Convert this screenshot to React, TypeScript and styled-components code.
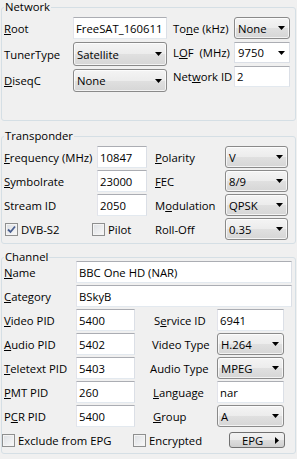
import React from "react";
import styled, { createGlobalStyle } from "styled-components";

const GlobalStyle = createGlobalStyle`
  html, body {
    margin: 0;
    padding: 0;
    background: #f0f0f0;
  }
  body {
    font-family: "Open Sans", "Noto Sans", sans-serif;
    font-size: 11.3px;
    color: #000;
  }
  * {
    box-sizing: border-box;
  }
`;

const Page = styled.div`
  width: 297px;
  height: 459px;
  padding: 0 1px;
  overflow: hidden;
`;

const Group = styled.fieldset<{ $mt: number; $pb: number }>`
  margin: ${p => p.$mt}px 0 0;
  padding: 0 3px ${p => p.$pb}px 2px;
  border: 1px solid #d5dfe5;
  border-radius: 3px;
  min-width: 0;
`;

const Legend = styled.legend`
  padding: 0 1px;
  height: 14px;
  line-height: 14px;
`;

const NetworkBody = styled.div`
  display: flex;
  gap: 6px;
  margin-top: 3px;
`;

const PairGrid = styled.div<{ $cols: string; $rows: string; $gap?: number }>`
  display: grid;
  grid-template-columns: ${p => p.$cols};
  grid-template-rows: ${p => p.$rows};
  row-gap: ${p => p.$gap ?? 3}px;
`;

const Label = styled.div<{ $indent?: number }>`
  display: flex;
  align-items: center;
  white-space: nowrap;
  padding-left: ${p => p.$indent ?? 0}px;
`;

const Key = styled.span`
  text-decoration: underline;
  text-underline-offset: 1px;
`;

const TextBox = styled.input<{ $span?: string; $mr?: number }>`
  font: inherit;
  color: #000;
  width: 100%;
  height: 100%;
  margin: 0;
  margin-right: ${p => p.$mr ?? 0}px;
  padding: 0 2px;
  background: #fff;
  border: 1px solid;
  border-color: #abadb3 #dbdfe6 #e3e9ef #e2e3ea;
  outline: none;
  grid-column: ${p => p.$span ?? "auto"};
`;

const Dropdown = styled.div<{ $editable?: boolean }>`
  display: flex;
  align-items: center;
  justify-content: space-between;
  padding: 0 4px 0 3px;
  border: 1px solid ${p => (p.$editable ? "#dbdfe6" : "#8a8a8a")};
  border-top-color: ${p => (p.$editable ? "#abadb3" : "#8a8a8a")};
  border-radius: ${p => (p.$editable ? 0 : 3)}px;
  background: ${p =>
    p.$editable
      ? "#fff"
      : "linear-gradient(#f4f4f4 0%, #ececec 50%, #e0e0e0 51%, #d6d6d6 100%)"};
  box-shadow: ${p => (p.$editable ? "none" : "inset 0 0 0 1px rgba(255,255,255,0.7)")};
`;

const ArrowIcon = ({ dir = "down" }: { dir?: "down" | "right" }) =>
  dir === "down" ? (
    <svg width="7" height="4" viewBox="0 0 7 4">
      <polygon points="0,0 7,0 3.5,4" fill="#000" />
    </svg>
  ) : (
    <svg width="4" height="7" viewBox="0 0 4 7">
      <polygon points="0,0 4,3.5 0,7" fill="#000" />
    </svg>
  );

const Select = ({ value, editable }: { value: string; editable?: boolean }) => (
  <Dropdown $editable={editable}>
    <span>{value}</span>
    <ArrowIcon />
  </Dropdown>
);

const TransponderGrid = styled.div`
  display: grid;
  grid-template-columns: 93px 50px 78px 63px;
  grid-template-rows: repeat(4, 22px);
  row-gap: 2px;
  margin-top: 3px;
`;

const CheckRow = styled.div<{ $cols: string; $ml: number; $span?: string }>`
  grid-column: ${p => p.$span ?? "1 / -1"};
  display: grid;
  grid-template-columns: ${p => p.$cols};
  align-items: center;
  margin-left: ${p => p.$ml}px;
`;

const CheckItem = styled.label`
  display: flex;
  align-items: center;
  gap: 3px;
  white-space: nowrap;
`;

const CheckBox = styled.span`
  display: inline-flex;
  align-items: center;
  justify-content: center;
  width: 13px;
  height: 13px;
  border: 1px solid #8e8f8f;
  background: linear-gradient(135deg, #dcdfe3 0%, #f9f9f9 100%);
  box-shadow: inset 0 0 0 1px #f4f4f4;
`;

const Check = ({ label, checked }: { label: string; checked?: boolean }) => (
  <CheckItem>
    <CheckBox>
      {checked && (
        <svg width="9" height="9" viewBox="0 0 9 9">
          <path d="M1 4.5 L3.5 7 L8 1.5" stroke="#4a5f8f" strokeWidth="1.8" fill="none" />
        </svg>
      )}
    </CheckBox>
    <span>{label}</span>
  </CheckItem>
);

const ChannelGrid = styled.div`
  display: grid;
  grid-template-columns: 72px 59px 82px 67px 1fr;
  grid-template-rows: repeat(8, 22px);
  row-gap: 2px;
  margin-top: -3px;
`;

const Spacer = styled.div``;

const Button = styled.div`
  display: flex;
  align-items: center;
  height: 16px;
  width: 56px;
  padding: 0 5px 0 12px;
  border: 1px solid #707070;
  border-radius: 3px;
  background: linear-gradient(#f2f2f2 0%, #ebebeb 50%, #dddddd 51%, #cfcfcf 100%);
  span {
    flex: 1;
  }
`;

export default function App() {
  return (
    <Page>
      <GlobalStyle />
      <Group $mt={0} $pb={28}>
        <Legend>Network</Legend>
        <NetworkBody>
          <PairGrid $cols="69px 94px" $rows="22px 24px 23px">
            <Label>
              <Key>R</Key>oot
            </Label>
            <TextBox readOnly value="FreeSAT_160611" />
            <Label>TunerType</Label>
            <Select value="Satellite" />
            <Label>
              <Key>D</Key>iseqC
            </Label>
            <Select value="None" />
          </PairGrid>
          <PairGrid $cols="61px 56px" $rows="22px 21px 21px">
            <Label>
              To<Key>n</Key>e (kHz)
            </Label>
            <Select value="None" />
            <Label>
              L<Key>O</Key>F&nbsp;&nbsp;(MHz)
            </Label>
            <Select value="9750" editable />
            <Label>
              Net<Key>w</Key>ork ID
            </Label>
            <TextBox readOnly value="2" />
          </PairGrid>
        </NetworkBody>
      </Group>

      <Group $mt={8} $pb={3}>
        <Legend>Transponder</Legend>
        <TransponderGrid>
          <Label>
            <Key>F</Key>requency (MHz)
          </Label>
          <TextBox readOnly value="10847" />
          <Label $indent={8}>
            <Key>P</Key>olarity
          </Label>
          <Select value="V" />

          <Label>
            <Key>S</Key>ymbolrate
          </Label>
          <TextBox readOnly value="23000" />
          <Label $indent={8}>
            <Key>F</Key>EC
          </Label>
          <Select value="8/9" />

          <Label>Stream ID</Label>
          <TextBox readOnly value="2050" />
          <Label $indent={8}>
            M<Key>o</Key>dulation
          </Label>
          <Select value="QPSK" />

          <CheckRow $cols="87px auto" $ml={1} $span="1 / 3">
            <Check label="DVB-S2" checked />
            <Check label="Pilot" />
          </CheckRow>
          <Label $indent={8}>Roll-Off</Label>
          <Select value="0.35" />
        </TransponderGrid>
      </Group>

      <Group $mt={6} $pb={2}>
        <Legend>Channel</Legend>
        <ChannelGrid>
          <Label>
            <Key>N</Key>ame
          </Label>
          <TextBox readOnly value="BBC One HD (NAR)" $span="2 / -1" $mr={3} />

          <Label>
            <Key>C</Key>ategory
          </Label>
          <TextBox readOnly value="BSkyB" $span="2 / -1" $mr={3} />

          <Label>
            <Key>V</Key>ideo PID
          </Label>
          <TextBox readOnly value="5400" />
          <Label $indent={19}>
            S<Key>e</Key>rvice ID
          </Label>
          <TextBox readOnly value="6941" />
          <Spacer />

          <Label>
            <Key>A</Key>udio PID
          </Label>
          <TextBox readOnly value="5402" />
          <Label $indent={17}>Video Type</Label>
          <Select value="H.264" />
          <Spacer />

          <Label>
            <Key>T</Key>eletext PID
          </Label>
          <TextBox readOnly value="5403" />
          <Label $indent={15}>Audio Type</Label>
          <Select value="MPEG" />
          <Spacer />

          <Label>
            <Key>P</Key>MT PID
          </Label>
          <TextBox readOnly value="260" />
          <Label $indent={18}>
            <Key>L</Key>anguage
          </Label>
          <TextBox readOnly value="nar" />
          <Spacer />

          <Label>
            P<Key>C</Key>R PID
          </Label>
          <TextBox readOnly value="5400" />
          <Label $indent={18}>
            <Key>G</Key>roup
          </Label>
          <Select value="A" />
          <Spacer />

          <CheckRow $cols="131px 96px 56px" $ml={-2}>
            <Check label="Exclude from EPG" />
            <Check label="Encrypted" />
            <Button>
              <span>EPG</span>
              <ArrowIcon dir="right" />
            </Button>
          </CheckRow>
        </ChannelGrid>
      </Group>
    </Page>
  );
}
